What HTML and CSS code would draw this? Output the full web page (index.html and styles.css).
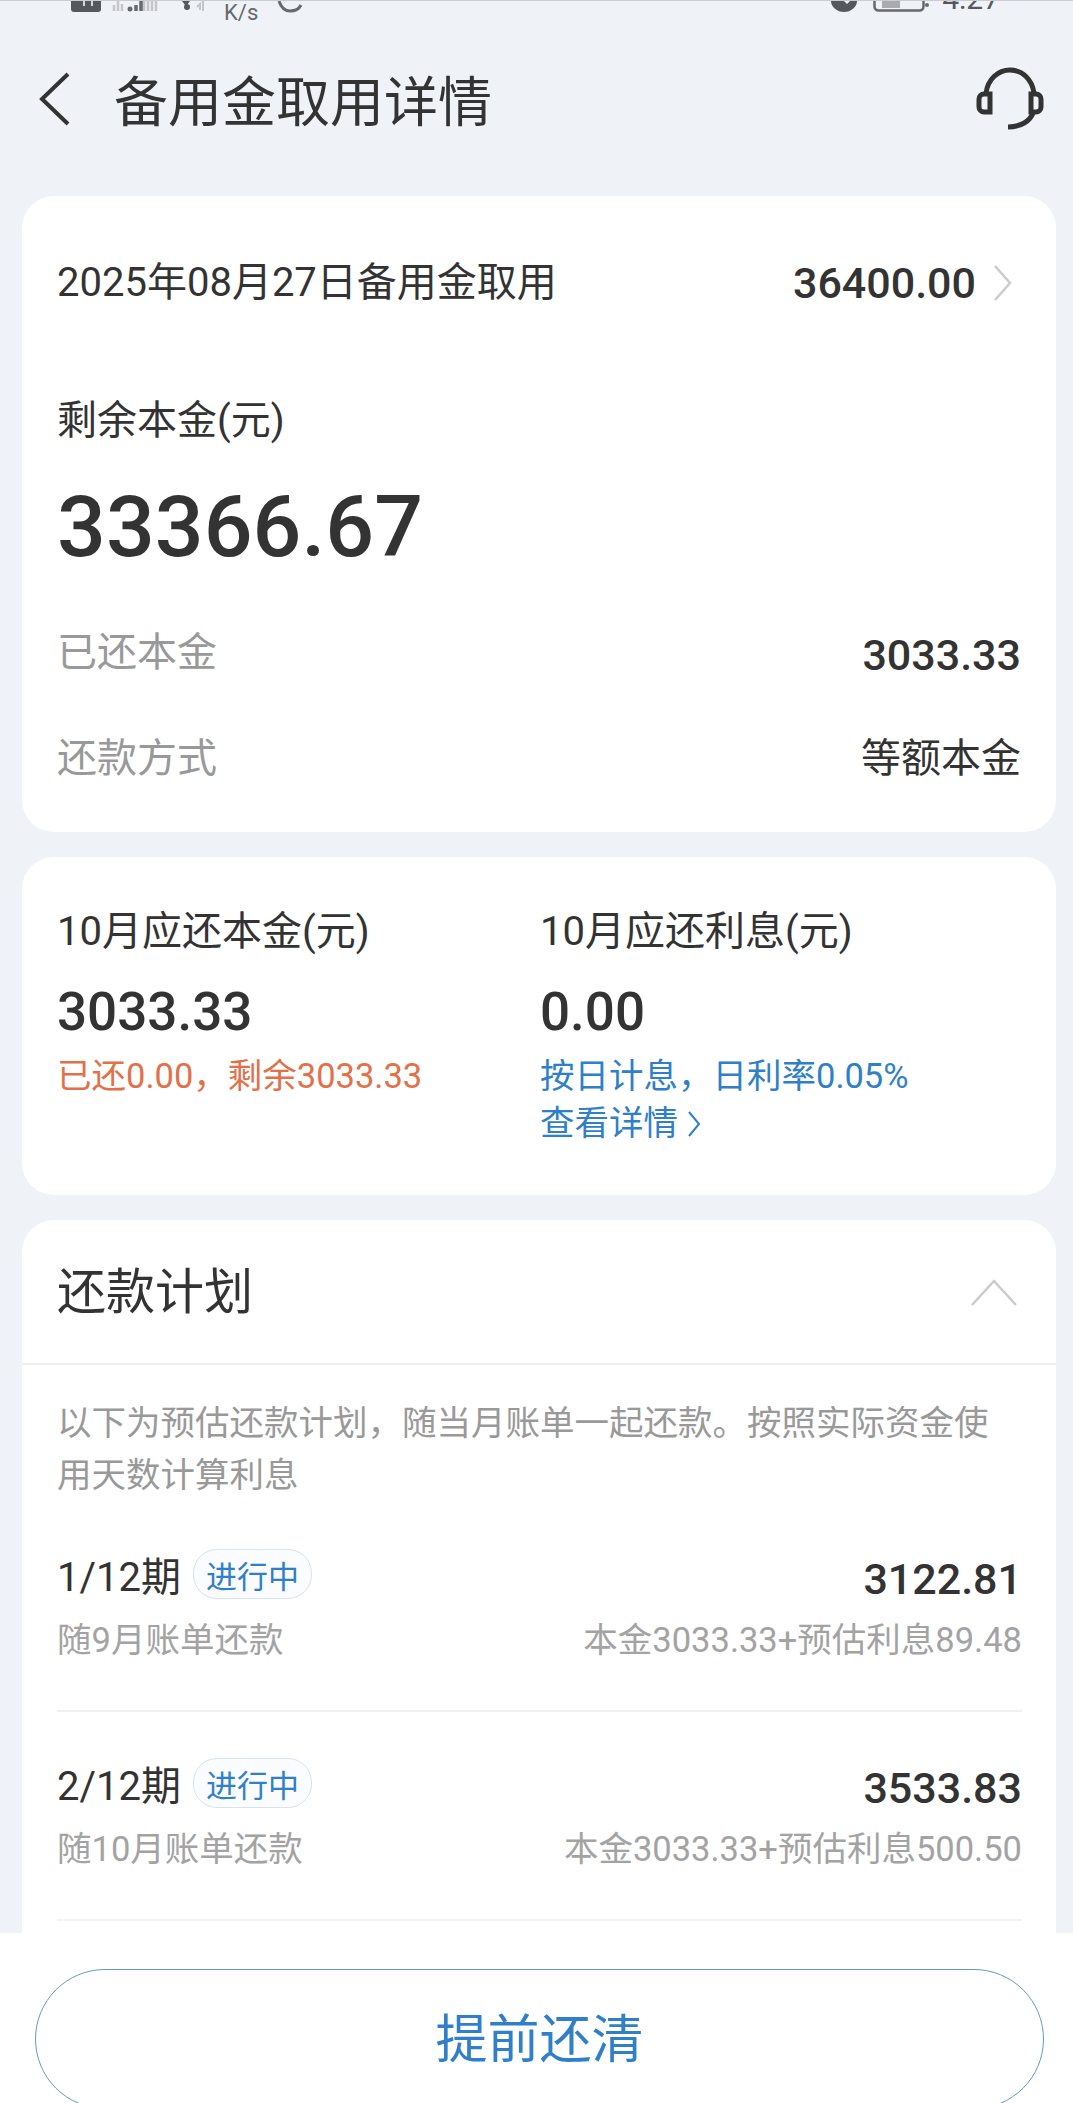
FILE: index.html
```html
<!DOCTYPE html>
<html lang="zh">
<head>
    <meta charset="UTF-8">
    <title>备用金取用详情</title>
    <link rel="stylesheet" href="styles.css">
</head>
<body>
    <div class="page">
        <div class="status-bar">
            <div class="status-left">
                <svg class="st-sim" width="30" height="11" viewBox="0 0 30 11"><rect x="0" y="-8" width="30" height="19" rx="3" fill="#55585c"/><path d="M13 0v5M21 0v5" stroke="#d5d7da" stroke-width="2"/></svg>
                <svg class="st-signal" width="48" height="11" viewBox="0 0 48 11"><path d="M2 4v6M6 0v10M10 3v7M32 0v10M36 0v10M40 0v10M44 0v10" stroke="#c4c6c9" stroke-width="2.5"/><circle cx="18" cy="8" r="2.5" fill="#66696d"/><path d="M24 4v6M29 0v10" stroke="#66696d" stroke-width="3.5"/></svg>
                <svg class="st-wifi" width="24" height="10" viewBox="0 0 24 10"><path d="M0 0h8L5 4H3z" fill="#55585c"/><circle cx="5" cy="6" r="3" fill="#55585c"/><path d="M15 6l3-3v6M21 0v10" stroke="#c4c6c9" stroke-width="2" fill="none"/></svg>
                <span class="st-speed">K/s</span>
                <svg class="st-arc" width="26" height="12" viewBox="0 0 26 12"><path d="M2 0c2 6 6 10 11 10s9-2 11-6" fill="none" stroke="#66696d" stroke-width="3"/></svg>
            </div>
            <div class="status-right">
                <svg class="st-moon" width="26" height="11" viewBox="0 0 26 11"><path d="M0 0h26c0 6-6 11-13 11S0 6 0 0z" fill="#55585c"/><path d="M13 0l3 3 3-3z" fill="#eff3f8"/></svg>
                <svg class="st-battery" width="56" height="11" viewBox="0 0 56 11"><rect x="9" y="-4" width="18" height="11" fill="#a9abae"/><rect x="1.5" y="-8" width="49" height="17.5" rx="4" fill="none" stroke="#66696d" stroke-width="2.5"/><circle cx="54" cy="4" r="2" fill="#66696d"/></svg>
                <span class="st-time">4:27</span>
            </div>
        </div>

        <header class="nav">
            <svg class="nav-back" width="36" height="56" viewBox="0 0 36 56"><path d="M34 3 8 28l26 25" fill="none" stroke="#333" stroke-width="4"/></svg>
            <h1 class="nav-title">备用金取用详情</h1>
            <svg class="nav-service" width="72" height="72" viewBox="0 0 72 72">
                <path d="M12 28C14 14 24 5 36 5s22 9 24 23" fill="none" stroke="#333" stroke-width="5"/>
                <path d="M16 29H10a5 5 0 0 0-5 5v8a5 5 0 0 0 5 5h6z" fill="none" stroke="#333" stroke-width="5"/>
                <path d="M57 29h5a5 5 0 0 1 5 5v8a5 5 0 0 1-5 5h-5z" fill="none" stroke="#333" stroke-width="5"/>
                <path d="M59 48c-3 8-12 14-25 14" fill="none" stroke="#333" stroke-width="5"/>
            </svg>
        </header>

        <section class="card card-summary">
            <div class="row row-draw">
                <span class="draw-date">2025年08月27日备用金取用</span>
                <span class="draw-amount">36400.00<svg width="20" height="38" viewBox="0 0 20 38"><path d="M2 2l15 17L2 36" fill="none" stroke="#c9cbce" stroke-width="2.5"/></svg></span>
            </div>
            <div class="remain-label">剩余本金(元)</div>
            <div class="remain-value">33366.67</div>
            <div class="row row-paid">
                <span class="muted-label">已还本金</span>
                <span class="paid-value">3033.33</span>
            </div>
            <div class="row row-method">
                <span class="muted-label">还款方式</span>
                <span class="method-value">等额本金</span>
            </div>
        </section>

        <section class="card card-month">
            <div class="month-col">
                <div class="month-label">10月应还本金(元)</div>
                <div class="month-value">3033.33</div>
                <div class="month-note note-orange">已还0.00，剩余3033.33</div>
            </div>
            <div class="month-col">
                <div class="month-label">10月应还利息(元)</div>
                <div class="month-value">0.00</div>
                <div class="month-note note-blue">按日计息，日利率0.05%</div>
                <div class="month-note note-blue">查看详情<svg width="16" height="30" viewBox="0 0 16 30"><path d="M3 3l10 12L3 27" fill="none" stroke="#2f7fc9" stroke-width="2"/></svg></div>
            </div>
        </section>

        <section class="card card-plan">
            <div class="plan-head">
                <h2 class="plan-title">还款计划</h2>
                <svg width="48" height="30" viewBox="0 0 48 30"><path d="M2 28 24 4l22 24" fill="none" stroke="#c9cbce" stroke-width="2.5"/></svg>
            </div>
            <p class="plan-intro">以下为预估还款计划，随当月账单一起还款。按照实际资金使用天数计算利息</p>
            <div class="plan-item">
                <div class="row">
                    <span class="term">1/12期<span class="tag">进行中</span></span>
                    <span class="term-amount">3122.81</span>
                </div>
                <div class="row row-sub">
                    <span>随9月账单还款</span>
                    <span>本金3033.33+预估利息89.48</span>
                </div>
            </div>
            <div class="plan-item">
                <div class="row">
                    <span class="term">2/12期<span class="tag">进行中</span></span>
                    <span class="term-amount">3533.83</span>
                </div>
                <div class="row row-sub">
                    <span>随10月账单还款</span>
                    <span>本金3033.33+预估利息500.50</span>
                </div>
            </div>
        </section>

        <footer class="bottom-bar">
            <button type="button" class="btn-payoff">提前还清</button>
        </footer>
    </div>
</body>
</html>
```

FILE: styles.css
```css
html, body {
    margin: 0;
    padding: 0;
}
body {
    width: 1073px;
    height: 2103px;
    overflow: hidden;
    background-color: #eff3f8;
    font-family: Roboto, "Noto Sans CJK SC", sans-serif;
    color: #333;
}
.page {
    position: relative;
    height: 2103px;
    overflow: hidden;
    border-top: 1px solid #c9ccd2;
    box-sizing: border-box;
}
.row {
    display: flex;
    justify-content: space-between;
    align-items: center;
}

/* status bar, cut off by the top of the picture */
.status-bar {
    height: 40px;
    padding: 0 73px 0 71px;
    display: flex;
    justify-content: space-between;
    align-items: flex-start;
}
.status-left,
.status-right {
    display: flex;
    align-items: flex-start;
}
.st-signal {
    margin-left: 11px;
}
.st-wifi {
    margin-left: 22px;
}
.st-speed {
    margin-left: 18px;
    margin-top: -1px;
    font-size: 22px;
    line-height: 26px;
    color: #66696d;
}
.st-arc {
    margin-left: 19px;
}
.st-battery {
    margin-left: 16px;
}
.st-time {
    margin-left: 13px;
    margin-top: -22px;
    font-size: 30px;
    line-height: 40px;
    color: #55585c;
}

/* header */
.nav {
    height: 155px;
    padding: 0 27px 40px 34px;
    display: flex;
    align-items: center;
    box-sizing: border-box;
}
.nav-title {
    margin: 0 0 0 44px;
    flex: 1;
    font-size: 54px;
    font-weight: 400;
    color: #333;
}
.nav-service {
    margin-top: 4px;
}

.card {
    margin: 0 17px 25px 22px;
    background-color: #fff;
    border-radius: 32px;
    box-sizing: border-box;
}

/* first card */
.card-summary {
    height: 636px;
    padding: 0 35px;
}
.row-draw {
    padding-top: 28px;
    height: 110px;
    box-sizing: content-box;
}
.draw-date {
    font-size: 40px;
}
.draw-amount {
    display: flex;
    align-items: center;
    gap: 17px;
    margin-top: 8px;
    padding-right: 8px;
    font-size: 43px;
    font-weight: 500;
}
.remain-label {
    margin-top: 62px;
    font-size: 40px;
    line-height: 50px;
}
.remain-value {
    margin-top: 31px;
    font-size: 86px;
    line-height: 100px;
    font-weight: 500;
}
.row-paid {
    margin-top: 42px;
    height: 60px;
}
.row-method {
    margin-top: 46px;
    height: 60px;
}
.muted-label {
    font-size: 40px;
    color: #999;
}
.paid-value {
    margin-top: 12px;
    font-size: 43px;
    font-weight: 500;
}
.method-value {
    font-size: 40px;
}

/* this month */
.card-month {
    height: 338px;
    padding: 50px 35px 0 35px;
    display: grid;
    grid-template-columns: 483px 1fr;
}
.month-label {
    font-size: 40px;
    line-height: 50px;
}
.month-value {
    margin-top: 24px;
    font-size: 53px;
    line-height: 62px;
    font-weight: 500;
}
.month-note {
    font-size: 34.5px;
    line-height: 47px;
    display: flex;
    align-items: center;
    gap: 8px;
}
.month-value + .month-note {
    margin-top: 10px;
}
.note-orange {
    color: #e2714a;
}
.note-blue {
    color: #2f7fc9;
}

/* plan */
.card-plan {
    min-height: 900px;
    margin-bottom: 0;
    padding: 0 34px 0 35px;
}
.plan-head {
    height: 143px;
    margin: 0 -34px 0 -35px;
    padding: 0 38px 0 35px;
    display: flex;
    justify-content: space-between;
    align-items: center;
    border-bottom: 2px solid #eceef1;
}
.plan-title {
    margin: -8px 0 0 0;
    font-size: 49px;
    font-weight: 400;
}
.plan-intro {
    margin: 32px 10px 2px 0;
    font-size: 34.5px;
    line-height: 52px;
    color: #999;
}
.plan-item {
    height: 209px;
    padding-top: 42px;
    border-bottom: 2px solid #f0f1f3;
    box-sizing: border-box;
}
.term {
    display: flex;
    align-items: center;
    font-size: 40px;
}
.tag {
    margin-left: 12px;
    height: 48px;
    padding: 0 12px;
    display: inline-flex;
    align-items: center;
    border: 1px solid #d5e3ef;
    border-radius: 24px;
    font-size: 31px;
    color: #2f7fc9;
    background-color: #fafcff;
}
.term-amount {
    margin-top: 10px;
    font-size: 43px;
    line-height: 40px;
    font-weight: 500;
}
.row-sub {
    margin-top: 9px;
    font-size: 34.5px;
    color: #a3a3a3;
}

/* bottom button */
.bottom-bar {
    position: absolute;
    left: 0;
    right: 0;
    top: 1932px;
    height: 171px;
    padding: 36px 29px 0 35px;
    background-color: #fff;
    box-sizing: border-box;
}
.btn-payoff {
    width: 100%;
    height: 140px;
    padding: 0 0 8px 0;
    border: 1.5px solid #5f9cc6;
    border-radius: 95px;
    background-color: #fff;
    font-family: inherit;
    font-size: 52px;
    color: #2f7fc9;
}
```
